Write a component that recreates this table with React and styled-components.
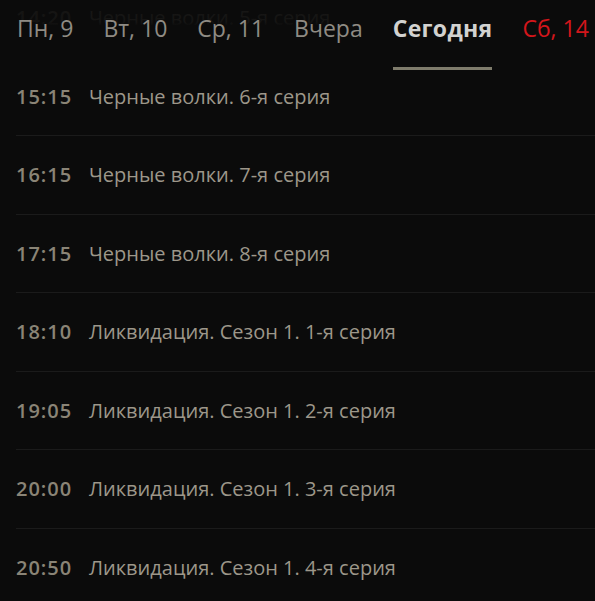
import React from "react";
import styled, { createGlobalStyle } from "styled-components";

const Global = createGlobalStyle`
  html, body { margin: 0; padding: 0; background: #0b0b0b; }
  body { font-family: "Open Sans", "Noto Sans", sans-serif; overflow: hidden; }
`;

const Viewport = styled.div`
  position: relative;
  width: 595px;
  height: 601px;
  overflow: hidden;
  background: #0b0b0b;
`;

const Header = styled.nav`
  position: absolute;
  top: 0;
  left: 0;
  right: 0;
  height: 70px;
  display: flex;
  gap: 30px;
  padding: 0 0 0 17px;
  background: linear-gradient(rgba(11, 11, 11, 0.91) 0px, rgba(11, 11, 11, 0.93) 22px, #0b0b0b 26px);
  z-index: 2;
  white-space: nowrap;
`;

const Tab = styled.div`
  position: relative;
  display: flex;
  align-items: center;
  height: 100%;
  padding-bottom: 15px;
  box-sizing: border-box;
  font-size: 23px;
  letter-spacing: ${(p) => (p.$active ? "0.3px" : "0")};
  font-weight: ${(p) => (p.$active ? 700 : 400)};
  color: ${(p) => (p.$active ? "#d2d2d0" : p.$holiday ? "#d3161b" : "#8f8b84")};
  &::after {
    content: "";
    display: ${(p) => (p.$active ? "block" : "none")};
    position: absolute;
    left: 0;
    right: 0;
    bottom: 0;
    height: 3px;
    background: #7f7c6c;
  }
`;

const List = styled.div`
  display: flex;
  flex-direction: column;
`;

const Row = styled.div`
  display: flex;
  align-items: center;
  height: 78.5px;
  margin-left: 16px;
  box-sizing: border-box;
  border-bottom: 1px solid #1b1b1b;
  font-size: 20px;
  white-space: nowrap;
`;

const Time = styled.span`
  width: 73px;
  flex: none;
  font-weight: 600;
  letter-spacing: 1px;
  color: #8a8476;
`;

const Title = styled.span`
  color: #9d978a;
  font-weight: 400;
`;

const days = [
  { label: "Пн, 9" },
  { label: "Вт, 10" },
  { label: "Ср, 11" },
  { label: "Вчера" },
  { label: "Сегодня", active: true },
  { label: "Сб, 14", holiday: true },
];

const shows = [
  ["14:20", "Черные волки. 5-я серия"],
  ["15:15", "Черные волки. 6-я серия"],
  ["16:15", "Черные волки. 7-я серия"],
  ["17:15", "Черные волки. 8-я серия"],
  ["18:10", "Ликвидация. Сезон 1. 1-я серия"],
  ["19:05", "Ликвидация. Сезон 1. 2-я серия"],
  ["20:00", "Ликвидация. Сезон 1. 3-я серия"],
  ["20:50", "Ликвидация. Сезон 1. 4-я серия"],
  ["21:45", "Ликвидация. Сезон 1. 5-я серия"],
];

const scrollOffset = 21;

export default function App() {
  return (
    <>
      <Global />
      <Viewport>
        <Header>
          {days.map((d) => (
            <Tab key={d.label} $active={d.active} $holiday={d.holiday}>
              {d.label}
            </Tab>
          ))}
        </Header>
        <List style={{ marginTop: -scrollOffset }}>
          {shows.map(([t, name]) => (
            <Row key={t}>
              <Time>{t}</Time>
              <Title>{name}</Title>
            </Row>
          ))}
        </List>
      </Viewport>
    </>
  );
}
